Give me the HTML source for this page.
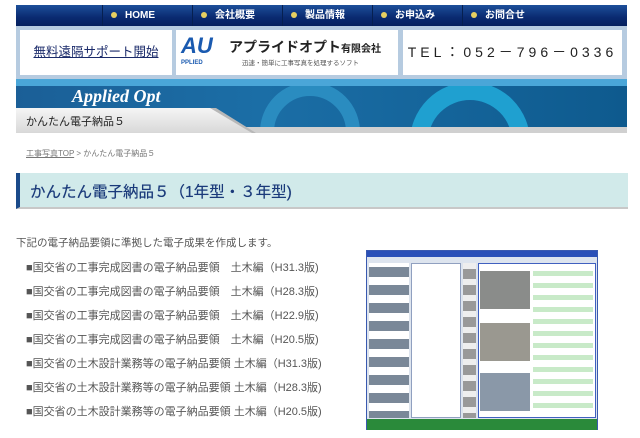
<!DOCTYPE html>
<html><head><meta charset="utf-8"><style>
*{margin:0;padding:0;box-sizing:border-box}
body{width:640px;height:438px;background:#fff;font-family:"Liberation Sans","Noto Sans CJK JP",sans-serif;position:relative;overflow:hidden}
.a{position:absolute}
.nav{left:16px;top:5px;width:611px;height:21px;background:linear-gradient(#1d4f9a,#0a2a70 60%,#06205e)}
.nav span{position:absolute;top:0;height:21px;line-height:21px;color:#fff;font-size:10px;font-weight:bold;border-left:1px solid #062050;padding-left:8px}
.nav i{display:inline-block;width:6px;height:6px;background:#e8d060;border-radius:50%;margin-right:8px;vertical-align:0}
.hdr{left:16px;top:26px;width:611px;height:53px;background:#b6cbe0}
.box{background:#fff;top:30px;height:45px}
.li{font-size:11px;color:#555;left:26px}
</style></head><body>
<div class="a nav">
<span style="left:86px;width:90px"><i></i>HOME</span>
<span style="left:176px;width:90px"><i></i>会社概要</span>
<span style="left:266px;width:90px"><i></i>製品情報</span>
<span style="left:356px;width:90px"><i></i>お申込み</span>
<span style="left:446px;width:165px"><i></i>お問合せ</span>
</div>
<div class="a hdr"></div>
<div class="a box" style="left:20px;width:152px"><div style="text-align:center;line-height:45px;font-size:12.5px;color:#1a2a6a;text-decoration:underline">無料遠隔サポート開始</div></div>
<div class="a box" style="left:176px;width:222px">
<div class="a" style="left:5px;top:3px;font-size:22px;font-weight:bold;color:#1a5ab0;font-style:italic">AU</div>
<div class="a" style="left:5px;top:30px;font-size:6px;font-weight:bold;color:#1a5ab0">PPLIED</div>
<div class="a" style="left:53px;top:7px;font-size:14px;font-weight:bold;color:#222">アプライドオプト<span style="font-size:10px">有限会社</span></div>
<div class="a" style="left:66px;top:27px;font-size:6.5px;color:#555">迅速・簡単に工事写真を処理するソフト</div>
</div>
<div class="a box" style="left:403px;width:219px"><div style="text-align:center;line-height:45px;font-size:14px;letter-spacing:4px;color:#222">TEL：052－796－0336</div></div>
<div class="a" style="left:16px;top:79px;width:611px;height:7px;background:#4aa6d8"></div>
<div class="a" style="left:16px;top:86px;width:611px;height:47px;background:linear-gradient(90deg,#1b5f97,#1b6ea6 40%,#0e5a8e)"></div>
<div class="a" style="left:260px;top:82px;width:100px;height:100px;border:14px solid #2a8cc0;border-radius:50%;clip-path:inset(4px 0 49px 0)"></div>
<div class="a" style="left:410px;top:82px;width:120px;height:120px;border:18px solid #1fa0d0;border-radius:50%;clip-path:inset(4px 0 69px 0)"></div>
<div class="a" style="left:72px;top:86px;font-family:'Liberation Serif',serif;font-style:italic;font-weight:bold;font-size:18px;color:#fff">Applied Opt</div>
<div class="a" style="left:16px;top:127px;width:611px;height:6px;background:#d0d0d0"></div>
<div class="a" style="left:16px;top:108px;width:240px;height:25px;background:#b8b8b8;clip-path:polygon(0 0,200px 0,240px 100%,0 100%)"></div>
<div class="a" style="left:16px;top:108px;width:236px;height:25px;background:linear-gradient(#f5f5f5,#d8d8d8);clip-path:polygon(0 0,194px 0,236px 100%,0 100%)"></div>
<div class="a" style="left:26px;top:113px;font-size:11px;color:#222">かんたん電子納品５</div>
<div class="a" style="left:26px;top:148px;font-size:8px;color:#777"><span style="text-decoration:underline">工事写真TOP</span> &gt; かんたん電子納品５</div>
<div class="a" style="left:16px;top:173px;width:612px;height:36px;background:#d1eaea;border-left:4px solid #1a4a8a;border-bottom:2px solid #c8c8c8"></div>
<div class="a" style="left:30px;top:180px;font-size:15.5px;color:#1a3a7a;text-shadow:0 0 0.4px #1a3a7a">かんたん電子納品５（1年型・３年型)</div>
<div class="a" style="left:16px;top:235px;font-size:10.5px;color:#555">下記の電子納品要領に準拠した電子成果を作成します。</div>
<div class="a li" style="top:259px">■国交省の工事完成図書の電子納品要領　土木編（H31.3版)</div>
<div class="a li" style="top:283px">■国交省の工事完成図書の電子納品要領　土木編（H28.3版)</div>
<div class="a li" style="top:307px">■国交省の工事完成図書の電子納品要領　土木編（H22.9版)</div>
<div class="a li" style="top:331px">■国交省の工事完成図書の電子納品要領　土木編（H20.5版)</div>
<div class="a li" style="top:355px">■国交省の土木設計業務等の電子納品要領 土木編（H31.3版)</div>
<div class="a li" style="top:379px">■国交省の土木設計業務等の電子納品要領 土木編（H28.3版)</div>
<div class="a li" style="top:403px">■国交省の土木設計業務等の電子納品要領 土木編（H20.5版)</div>
<div class="a" style="left:366px;top:250px;width:232px;height:180px;background:#dde4ee;border:1px solid #3a5ab0">
<div class="a" style="left:0;top:0;width:230px;height:6px;background:#2a50b8"></div>
<div class="a" style="left:2px;top:12px;width:40px;height:155px;background:repeating-linear-gradient(#fff 0 4px,#7a8898 4px 14px,#fff 14px 18px)"></div>
<div class="a" style="left:44px;top:12px;width:50px;height:155px;background:#fff;border:1px solid #90a0c0"></div>
<div class="a" style="left:96px;top:12px;width:13px;height:155px;background:repeating-linear-gradient(#eee 0 6px,#999 6px 16px)"></div>
<div class="a" style="left:111px;top:12px;width:118px;height:155px;background:#fff;border:1px solid #4060c0"></div>
<div class="a" style="left:113px;top:20px;width:50px;height:38px;background:#8a8c8a"></div>
<div class="a" style="left:113px;top:72px;width:50px;height:38px;background:#9a9890"></div>
<div class="a" style="left:113px;top:122px;width:50px;height:38px;background:#8a98a8"></div>
<div class="a" style="left:166px;top:20px;width:60px;height:140px;background:repeating-linear-gradient(#c8eac8 0 5px,#fff 5px 12px)"></div>
<div class="a" style="left:0;top:168px;width:230px;height:11px;background:#2a8a3a"></div>
</div>
</body></html>
